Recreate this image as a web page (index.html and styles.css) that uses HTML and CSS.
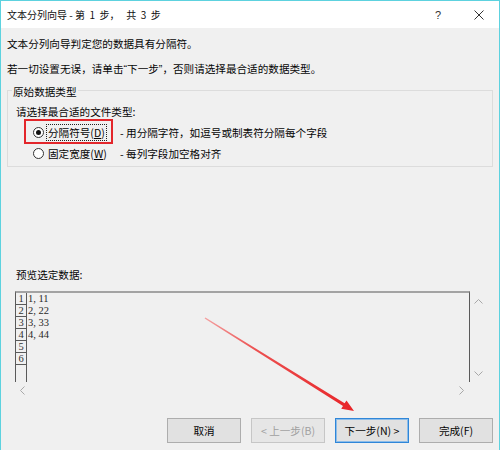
FILE: index.html
```html
<!DOCTYPE html>
<html lang="zh-CN">
<head>
<meta charset="utf-8">
<link rel="stylesheet" href="styles.css">
</head>
<body>
<div class="window">
  <header class="titlebar">
    <span class="title">文本分列向导 - 第  1  步，   共  3  步</span>
    <span class="help">?</span>
    <span class="close-btn">
      <svg width="10" height="10" viewBox="0 0 10 10"><path d="M0.5 0.5L9.5 9.5M9.5 0.5L0.5 9.5" stroke="#333" stroke-width="1" fill="none"/></svg>
    </span>
  </header>
  <main class="content">
    <p class="msg">文本分列向导判定您的数据具有分隔符。</p>
    <p class="msg msg2">若一切设置无误，请单击<span class="q">“</span>下一步<span class="q">”</span>，否则请选择最合适的数据类型。</p>
    <fieldset class="group">
      <legend>原始数据类型</legend>
      <div class="group-inner">
        <div class="prompt">请选择最合适的文件类型:</div>
        <div class="opt">
          <span class="radio checked"></span>
          <span class="opt-label"><span class="focus">分隔符号(<u>D</u>)</span></span>
          <span class="desc">- 用分隔字符，如逗号或制表符分隔每个字段</span>
          <span class="redbox"></span>
        </div>
        <div class="opt">
          <span class="radio"></span>
          <span class="opt-label"><span class="nofocus">固定宽度(<u>W</u>)</span></span>
          <span class="desc">- 每列字段加空格对齐</span>
        </div>
      </div>
    </fieldset>
    <div class="preview-label">预览选定数据:</div>
    <div class="preview">
      <div class="grid">
        <div class="nums">
          <div class="num">1</div>
          <div class="num">2</div>
          <div class="num">3</div>
          <div class="num">4</div>
          <div class="num">5</div>
          <div class="num">6</div>
        </div>
        <div class="data">
          <div class="row">1, 11</div>
          <div class="row">2, 22</div>
          <div class="row">3, 33</div>
          <div class="row">4, 44</div>
        </div>
      </div>
      <div class="vscroll">
        <svg width="9" height="5" viewBox="0 0 9 5"><path d="M0.5 4.5L4.5 0.5L8.5 4.5" stroke="#a8a8a8" fill="none"/></svg>
        <svg width="9" height="5" viewBox="0 0 9 5"><path d="M0.5 0.5L4.5 4.5L8.5 0.5" stroke="#a8a8a8" fill="none"/></svg>
      </div>
      <div class="hscroll">
        <svg width="5" height="9" viewBox="0 0 5 9"><path d="M4.5 0.5L0.5 4.5L4.5 8.5" stroke="#a8a8a8" fill="none"/></svg>
        <svg width="5" height="9" viewBox="0 0 5 9"><path d="M0.5 0.5L4.5 4.5L0.5 8.5" stroke="#a8a8a8" fill="none"/></svg>
      </div>
    </div>
    <div class="buttons">
      <button class="btn">取消</button>
      <button class="btn disabled">&lt; 上一步(B)</button>
      <button class="btn default">下一步(N) &gt;</button>
      <button class="btn">完成(F)</button>
    </div>
  </main>
  <svg class="arrow" width="500" height="450" viewBox="0 0 500 450">
    <defs>
      <linearGradient id="ag" gradientUnits="userSpaceOnUse" x1="205" y1="318" x2="350" y2="408">
        <stop offset="0" stop-color="#f4a0a0"/>
        <stop offset="0.35" stop-color="#ec5050"/>
        <stop offset="1" stop-color="#e8262a"/>
      </linearGradient>
    </defs>
    <polygon points="205.4,317.4 344.6,403.3 346.5,400.4 354,411 341.2,408.8 343.0,405.9 204.6,318.6" fill="url(#ag)"/>
  </svg>
</div>
</body>
</html>
```

FILE: styles.css
```css
html, body {
  margin: 0;
  padding: 0;
  background: #f0f0f0;
}

.window {
  position: relative;
  width: 500px;
  height: 450px;
  box-sizing: border-box;
  border: 1px solid #5dd2df;
  border-bottom: none;
  background: #f0f0f0;
  font-family: "Noto Sans CJK SC", "Microsoft YaHei", sans-serif;
  font-size: 10.6px;
  color: #050505;
  overflow: hidden;
}

.titlebar {
  display: flex;
  align-items: center;
  height: 27px;
  background: #ffffff;
}

.title {
  padding-left: 6px;
  font-size: 10px;
  color: #111;
  white-space: pre;
}

.help {
  margin-left: auto;
  width: 40px;
  text-align: center;
  font-family: "Liberation Sans", sans-serif;
  font-size: 11px;
  color: #333;
}

.close-btn {
  width: 41px;
  display: flex;
  justify-content: center;
  align-items: center;
}

.content {
  padding: 8px 6px 0 6px;
}

.msg {
  margin: 0;
  line-height: 16px;
}

.msg2 {
  margin-top: 9px;
}

.q {
  font-family: "Liberation Sans", sans-serif;
}

.group {
  margin: 3px 0 0 0;
  padding: 0 4px 2px 4px;
  border: 1px solid #dcdcdc;
  min-width: 0;
}

.group legend {
  padding: 4px 1px 0 1px;
  line-height: 16px;
}

.group-inner {
  padding-left: 4px;
}

.prompt {
  margin-top: 4px;
  line-height: 16px;
}

.opt {
  position: relative;
  display: flex;
  align-items: center;
  height: 21px;
}

.prompt + .opt {
  margin-top: 2px;
}

.radio {
  width: 11px;
  height: 11px;
  box-sizing: border-box;
  margin-left: 17px;
  border: 1px solid #333;
  border-radius: 50%;
  background: #fff;
  display: flex;
  align-items: center;
  justify-content: center;
  flex: none;
}

.radio.checked::after {
  content: "";
  width: 5px;
  height: 5px;
  border-radius: 50%;
  background: #111;
}

.opt-label {
  margin-left: 2px;
  width: 74px;
  flex: none;
}

.focus {
  display: inline-block;
  border: 1px dotted #222;
  padding: 0 1px;
  line-height: 15px;
}

.nofocus {
  display: inline-block;
  border: 1px solid transparent;
  padding: 0 1px;
  line-height: 15px;
}

.desc {
  white-space: nowrap;
}

.redbox {
  position: absolute;
  left: 8px;
  top: -3px;
  width: 89px;
  height: 25px;
  box-sizing: border-box;
  border: 2px solid #e3262b;
}

.preview-label {
  margin-top: 100px;
  padding-left: 9px;
  line-height: 16px;
}

.preview {
  margin: 8px 0 0 8px;
  display: grid;
  grid-template-columns: 455px 17px;
  grid-template-rows: 91px 16px;
  width: 472px;
}

.grid {
  box-sizing: border-box;
  border-top: 2px solid #a3a3a3;
  border-left: 1px solid #5a5a5a;
  border-right: 1px solid #5a5a5a;
  display: flex;
  background: #f0f0f0;
}

.nums {
  width: 10px;
  border-right: 1px solid #5a5a5a;
  flex: none;
}

.num {
  height: 12px;
  box-sizing: border-box;
  border-bottom: 1px solid #5a5a5a;
  line-height: 12px;
  text-align: center;
  font-family: "Liberation Serif", serif;
  font-size: 10.5px;
  color: #333;
}

.data {
  padding-left: 1px;
}

.row {
  height: 12px;
  line-height: 12px;
  font-family: "Liberation Serif", serif;
  font-size: 10.5px;
  color: #2a2a2a;
  white-space: pre;
}

.vscroll {
  display: flex;
  flex-direction: column;
  justify-content: space-between;
  align-items: center;
  padding: 8px 0 6px 0;
}

.hscroll {
  display: flex;
  justify-content: space-between;
  align-items: center;
  padding: 0 6px 0 5px;
}

.buttons {
  margin-top: 20px;
  display: flex;
  justify-content: flex-end;
  gap: 10px;
}

.btn {
  width: 74px;
  height: 25px;
  box-sizing: border-box;
  border: 1px solid #adadad;
  background: #e1e1e1;
  font-family: "Noto Sans CJK SC", "Microsoft YaHei", sans-serif;
  font-size: 10.6px;
  color: #050505;
  padding: 0;
  margin: 0;
}

.btn.disabled {
  color: #a0a0a0;
  border-color: #c6c6c6;
  background: #e6e6e6;
}

.btn.default {
  border-color: #2f86d8;
  box-shadow: inset 0 0 0 1px #8dbde9;
}

.arrow {
  position: absolute;
  left: -1px;
  top: -1px;
  pointer-events: none;
}
```
